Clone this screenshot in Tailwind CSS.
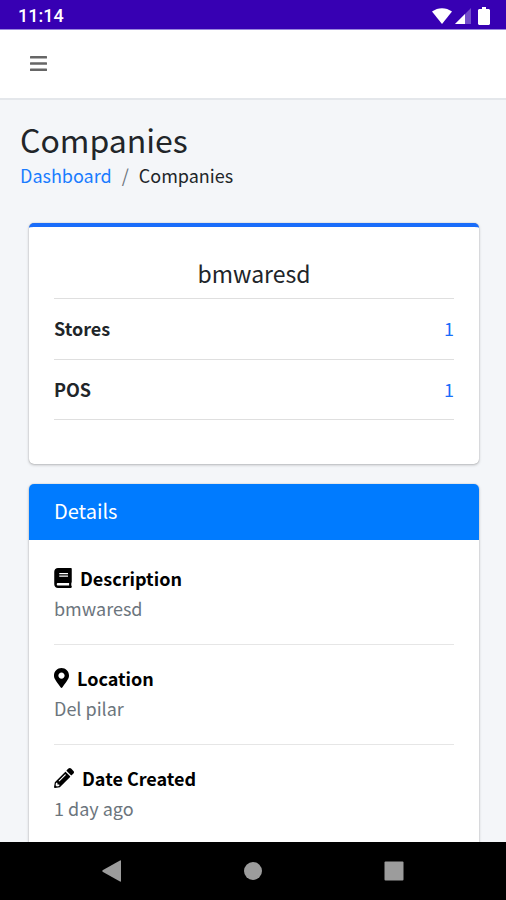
<!DOCTYPE html>
<html lang="en">
<head>
<meta charset="utf-8">
<meta name="viewport" content="width=device-width, initial-scale=1">
<title>Companies</title>
<script src="https://cdn.jsdelivr.net/npm/@tailwindcss/browser@4"></script>
</head>
<body class="flex h-screen flex-col overflow-hidden bg-[#f4f6f9] font-['Noto_Sans_CJK_SC','Noto_Sans',sans-serif] text-lg leading-[30px] text-[#212529]">

<div class="flex h-[30px] shrink-0 items-center justify-between border-b border-[#9a87dc] bg-[#3700b3] pt-0.5 pr-4 pl-[18px] text-white">
  <span class="font-[Roboto,sans-serif] text-lg leading-6 font-medium">11:14</span>
  <div class="flex items-center gap-[3px]">
    <svg class="h-4 w-5" viewBox="0 0 20 16" fill="currentColor" aria-hidden="true"><path d="M0 3.500C6-1 14-1 20 3.500L10 16z"/></svg>
    <svg class="h-4 w-4" viewBox="0 0 16 16" fill="currentColor" aria-hidden="true"><path d="M16 0v16H0z" opacity=".3"/><path d="M10 6v10H0z"/></svg>
    <svg class="ml-1 h-[18px] w-3" viewBox="0 0 12 18" fill="currentColor" aria-hidden="true"><path d="M4 0h4v2h3l1 1v14l-1 1H1l-1-1V3l1-1h3z"/></svg>
  </div>
</div>

<header class="flex h-[70px] shrink-0 items-center border-b-2 border-[#e4e7eb] bg-white px-[22px]">
  <button type="button" aria-label="Toggle menu" class="p-2 text-[#666]">
    <svg class="h-4 w-[17px]" viewBox="0 0 17 16" fill="currentColor" aria-hidden="true"><rect y="0" width="17" height="2.400" rx=".5"/><rect y="6.300" width="17" height="2.400" rx=".5"/><rect y="12.600" width="17" height="2.400" rx=".5"/></svg>
  </button>
</header>

<main class="min-h-0 flex-1 overflow-hidden">
  <div class="px-5 pt-[18px]">
    <h1 class="text-[32px] leading-[42px]">Companies</h1>
    <nav aria-label="Breadcrumb">
      <ol class="flex gap-[10px]">
        <li><a href="#" class="text-[#1a7cff]">Dashboard</a></li>
        <li aria-hidden="true" class="text-[#6c757d]">/</li>
        <li>Companies</li>
      </ol>
    </nav>
  </div>

  <div class="flex flex-col gap-5 pt-[33px] pr-[27px] pl-[29px]">
    <section class="rounded-[5px] border-t-4 border-[#1a6dfa] bg-white px-[25px] pt-[30px] pb-11 shadow-[0_0_1px_rgba(0,0,0,0.3),0_1px_3px_rgba(0,0,0,0.25)]">
      <h2 class="pb-[9px] text-center text-[23px] leading-8">bmwaresd</h2>
      <dl>
        <div class="flex justify-between border-t border-[#dfdfdf] pt-[14px] pb-4">
          <dt class="font-bold">Stores</dt>
          <dd><a href="#" class="text-[#1a6dfa]">1</a></dd>
        </div>
        <div class="flex justify-between border-y border-[#dfdfdf] pt-[14px] pb-[15px]">
          <dt class="font-bold">POS</dt>
          <dd><a href="#" class="text-[#1a6dfa]">1</a></dd>
        </div>
      </dl>
    </section>

    <section class="rounded-[5px] bg-white shadow-[0_0_1px_rgba(0,0,0,0.3),0_1px_3px_rgba(0,0,0,0.25)]">
      <h2 class="rounded-t-[5px] bg-[#007bff] px-[25px] pt-3 pb-[14px] text-xl leading-[30px] text-white">Details</h2>
      <dl class="px-[25px] pt-[5px] pb-6">
        <div class="border-b border-[#e6e6e6] pt-[18px] pb-[21px]">
          <dt class="flex items-center gap-2 font-bold text-black">
            <svg class="h-5 w-[18px]" viewBox="0 0 448 512" fill="currentColor" aria-hidden="true"><path d="M448 360V24c0-13.300-10.700-24-24-24H96C43 0 0 43 0 96v320c0 53 43 96 96 96h328c13.300 0 24-10.700 24-24v-16c0-7.500-3.500-14.300-8.900-18.700-4.200-15.400-4.200-59.300 0-74.700 5.400-4.300 8.900-11.100 8.900-18.600zM128 134c0-3.300 2.700-6 6-6h212c3.300 0 6 2.700 6 6v20c0 3.300-2.700 6-6 6H134c-3.300 0-6-2.700-6-6v-20zm0 64c0-3.300 2.700-6 6-6h212c3.300 0 6 2.700 6 6v20c0 3.300-2.700 6-6 6H134c-3.300 0-6-2.700-6-6v-20zm253.400 250H96c-17.700 0-32-14.300-32-32 0-17.600 14.400-32 32-32h285.400c-1.900 17.100-1.900 46.900 0 64z"/></svg>
            Description
          </dt>
          <dd class="text-[#6c757d]">bmwaresd</dd>
        </div>
        <div class="border-b border-[#e6e6e6] pt-[18px] pb-[21px]">
          <dt class="flex items-center gap-2 font-bold text-black">
            <svg class="h-5 w-[15px]" viewBox="0 0 384 512" fill="currentColor" aria-hidden="true"><path d="M172.268 501.670C26.970 291.031 0 269.413 0 192 0 85.961 85.961 0 192 0s192 85.961 192 192c0 77.413-26.970 99.031-172.268 309.670-9.535 13.774-29.930 13.773-39.464 0zM192 272c44.183 0 80-35.817 80-80s-35.817-80-80-80-80 35.817-80 80 35.817 80 80 80z"/></svg>
            Location
          </dt>
          <dd class="text-[#6c757d]">Del pilar</dd>
        </div>
        <div class="pt-[18px] pb-[21px]">
          <dt class="flex items-center gap-2 font-bold text-black">
            <svg class="h-5 w-5" viewBox="0 0 512 512" fill="currentColor" aria-hidden="true"><path d="M497.900 142.100l-46.100 46.100c-4.700 4.700-12.300 4.700-17 0l-111-111c-4.700-4.700-4.700-12.300 0-17l46.100-46.100c18.700-18.700 49.100-18.700 67.900 0l60.100 60.100c18.800 18.700 18.800 49.100 0 67.900zM284.200 99.800L21.600 362.400.4 483.900c-2.900 16.400 11.400 30.600 27.800 27.800l121.500-21.300 262.600-262.600c4.700-4.700 4.700-12.300 0-17l-111-111c-4.800-4.700-12.400-4.700-17.100 0zM124.100 339.900c-5.500-5.500-5.500-14.300 0-19.800l154-154c5.500-5.500 14.300-5.500 19.800 0s5.500 14.300 0 19.800l-154 154c-5.500 5.500-14.300 5.500-19.800 0zM88 424h48v36.300l-64.500 11.300-31.100-31.100L51.700 376H88v48z"/></svg>
            Date Created
          </dt>
          <dd class="text-[#6c757d]">1 day ago</dd>
        </div>
      </dl>
    </section>
  </div>
</main>

<nav aria-label="System" class="grid h-[58px] shrink-0 grid-cols-3 items-center bg-black px-[42px] text-[#9c9c9c]">
  <button type="button" aria-label="Back" class="flex justify-center"><svg class="h-[22px] w-5" viewBox="0 0 20 22" fill="currentColor" aria-hidden="true"><path d="M1 10 18 .5q1-.5 1 .5v20q0 1-1 .5L1 12q-1.500-1 0-2z"/></svg></button>
  <button type="button" aria-label="Home" class="flex justify-center"><svg class="h-5 w-5" viewBox="0 0 20 20" fill="currentColor" aria-hidden="true"><circle cx="10" cy="10" r="9"/></svg></button>
  <button type="button" aria-label="Recent apps" class="flex justify-center"><svg class="h-5 w-5" viewBox="0 0 20 20" fill="currentColor" aria-hidden="true"><rect x=".5" y=".5" width="19" height="19" rx="1"/></svg></button>
</nav>

</body>
</html>
